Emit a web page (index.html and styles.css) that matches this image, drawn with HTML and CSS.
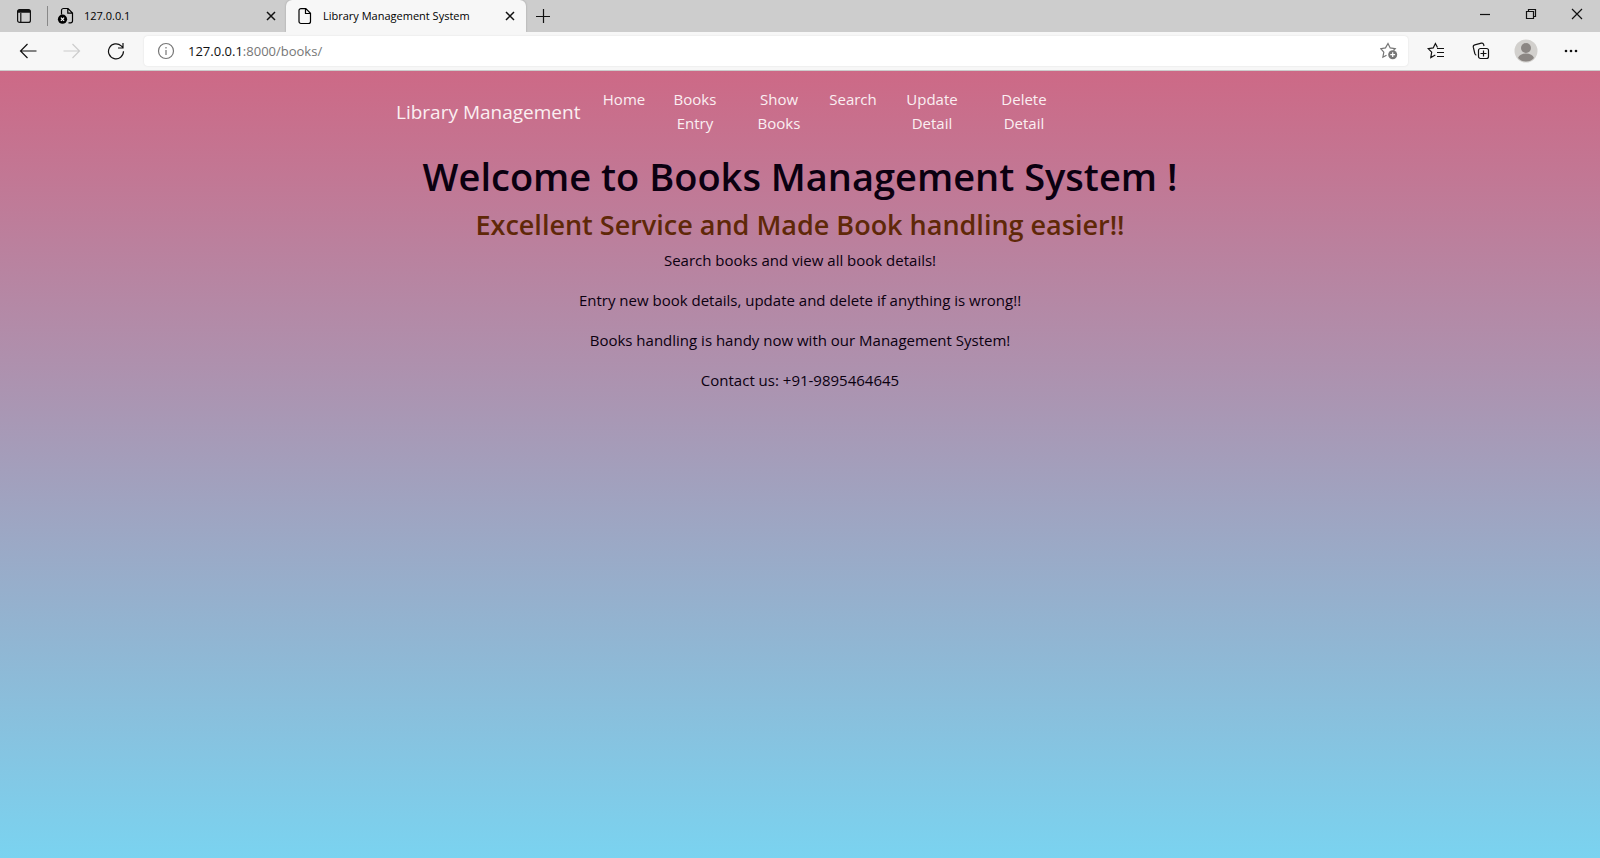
FILE: index.html
```html
<!DOCTYPE html>
<html lang="en">
<head>
<meta charset="utf-8">
<title>Library Management System</title>
<link rel="stylesheet" href="styles.css">
</head>
<body>
<div class="browser">
  <div class="tab-strip">
    <button class="icon-btn tab-menu" aria-label="Tab actions"><svg width="16" height="16" viewBox="0 0 16 16"><rect x="1.600" y="1.600" width="12.800" height="12.800" rx="2"/><path class="solid" d="M1.500 4.800V3.500a2 2 0 0 1 2-2h9a2 2 0 0 1 2 2v1.300z"/><path d="M4.800 5v9"/></svg></button>
    <span class="divider"></span>
    <div class="tab tab-idle">
      <svg class="tab-icon" width="18" height="18" viewBox="0 0 18 18"><path d="M4.500 7.500V3.500a2 2 0 0 1 2-2H11l4.500 4.500v8a1.800 1.800 0 0 1-1.800 1.800H11.500M10.800 1.700v4.500h4.500"/><circle cx="5.500" cy="12.200" r="4.600" class="solid"/><path class="light" d="M3.900 10.600l3.200 3.200M7.100 10.600l-3.200 3.200"/></svg>
      <span class="tab-title">127.0.0.1</span>
      <button class="icon-btn tab-close" aria-label="Close tab"><svg class="bold" width="10" height="10" viewBox="0 0 10 10"><path d="M1 1l8 8M9 1l-8 8"/></svg></button>
    </div>
    <div class="tab tab-active">
      <svg class="tab-icon" width="18" height="18" viewBox="0 0 18 18"><path d="M5 1.600h4.800l4.700 4.700v8.200a2 2 0 0 1-2 2H5a2 2 0 0 1-2-2V3.600a2 2 0 0 1 2-2zM9.500 1.800v4.700h4.800"/></svg>
      <span class="tab-title">Library Management System</span>
      <button class="icon-btn tab-close" aria-label="Close tab"><svg class="bold" width="10" height="10" viewBox="0 0 10 10"><path d="M1 1l8 8M9 1l-8 8"/></svg></button>
    </div>
    <button class="icon-btn new-tab" aria-label="New tab"><svg width="14" height="14" viewBox="0 0 14 14"><path d="M0 7.500h14M7.500 0v14"/></svg></button>
    <div class="window-controls">
      <button class="icon-btn" aria-label="Minimize"><svg width="12" height="12" viewBox="0 0 12 12"><path d="M1 6.500h10"/></svg></button>
      <button class="icon-btn" aria-label="Restore"><svg width="12" height="12" viewBox="0 0 12 12"><path d="M1.500 3.500h7v7h-7zM3.500 3.500v-2h7v7h-2"/></svg></button>
      <button class="icon-btn" aria-label="Close"><svg width="12" height="12" viewBox="0 0 12 12"><path d="M1 1l10 10M11 1L1 11"/></svg></button>
    </div>
  </div>
  <div class="toolbar">
    <div class="nav-buttons">
      <button class="icon-btn" aria-label="Back"><svg width="18" height="18" viewBox="0 0 18 18"><path d="M1.500 9h16M8.500 2l-7 7 7 7"/></svg></button>
      <button class="icon-btn muted" aria-label="Forward" disabled><svg width="18" height="18" viewBox="0 0 18 18"><path d="M.5 9h16M9.500 2l7 7-7 7"/></svg></button>
      <button class="icon-btn" aria-label="Refresh"><svg width="18" height="18" viewBox="0 0 18 18"><path d="M16.500 9.200A7.500 7.500 0 1 1 14.200 3.900L16 5.700M16 1v5h-5"/></svg></button>
    </div>
    <div class="address">
      <button class="icon-btn info" aria-label="Site information"><svg width="18" height="18" viewBox="0 0 18 18"><circle cx="9" cy="9" r="7.500"/><path d="M9 8v5M9 5v1.500"/></svg></button>
      <span class="url"><strong>127.0.0.1</strong>:8000/books/</span>
      <button class="icon-btn add-favorite" aria-label="Add to favorites"><svg width="18" height="18" viewBox="0 0 18 18"><path d="M6.500 13.200l-3.600 2 .9-5.100L.8 6.700l4.700-.8L8 1.500l2.200 4.400 5 .8-1.800 1.800"/><circle class="solid" cx="12.700" cy="12.700" r="4.500"/><path class="light" d="M10.300 12.700h4.800M12.700 10.300v4.800"/></svg></button>
    </div>
    <div class="tools">
      <button class="icon-btn" aria-label="Favorites"><svg width="18" height="18" viewBox="0 0 18 18"><path d="M10.500 5.500L8.400 1.500 6.200 5.900l-5 .8 3.500 3.500-.9 5.300 4.500-2.500M10 6.500h7M10 10.500h7M10 14.500h7"/></svg></button>
      <button class="icon-btn" aria-label="Collections"><svg width="18" height="18" viewBox="0 0 18 18"><rect x="6.500" y="6.500" width="10" height="10" rx="2"/><path d="M11.500 8.500v6M8.500 11.500h6M4.300 13.300a2.500 2.500 0 0 1-1.500-1.800L1.300 5.200a2 2 0 0 1 1.500-2.300l6.500-1.700a2 2 0 0 1 2.400 1.400l.3 1.400"/></svg></button>
      <button class="icon-btn" aria-label="Profile"><svg class="avatar" width="24" height="24" viewBox="0 0 24 24"><circle class="avatar-back" cx="12" cy="12" r="11.500"/><circle cx="12" cy="9" r="5"/><path d="M4 19c1-3 4-4.500 8-4.500s7 1.500 8 4.500a10.700 10.700 0 0 1-16 0z"/></svg></button>
      <button class="icon-btn" aria-label="Settings and more"><svg class="dots" width="16" height="16" viewBox="0 0 16 16"><circle cx="3" cy="8" r="1.300"/><circle cx="8" cy="8" r="1.300"/><circle cx="13" cy="8" r="1.300"/></svg></button>
    </div>
  </div>
</div>
<div class="page">
  <nav class="site-nav">
    <a class="brand" href="#">Library Management</a>
    <ul class="links">
      <li><a href="#">Home</a></li>
      <li><a href="#">Books Entry</a></li>
      <li><a href="#">Show Books</a></li>
      <li><a href="#">Search</a></li>
      <li><a href="#">Update Detail</a></li>
      <li><a href="#">Delete Detail</a></li>
    </ul>
  </nav>
  <main class="content">
    <h1>Welcome to Books Management System !</h1>
    <h2>Excellent Service and Made Book handling easier!!</h2>
    <p>Search books and view all book details!</p>
    <p>Entry new book details, update and delete if anything is wrong!!</p>
    <p>Books handling is handy now with our Management System!</p>
    <p>Contact us: +91-9895464645</p>
  </main>
</div>
</body>
</html>
```
FILE: styles.css
```css
* { box-sizing: border-box; }

body {
  margin: 0;
  min-height: 100vh;
  display: flex;
  flex-direction: column;
  font-family: "Open Sans", "Noto Sans", sans-serif;
  font-size: 15px;
  line-height: 24px;
}

svg {
  display: block;
  flex: none;
  fill: none;
  stroke: currentColor;
  stroke-width: 1.2;
}
svg .solid { fill: currentColor; stroke: none; }
svg .light { stroke: #fff; }
svg.bold { stroke-width: 1.5; }
svg.dots { fill: currentColor; stroke: none; }
svg.avatar { fill: #8b8683; stroke: none; }
svg .avatar-back { fill: #d2d0cd; }

.icon-btn {
  display: flex;
  align-items: center;
  justify-content: center;
  flex: none;
  padding: 0;
  border: 0;
  background: none;
  color: #111;
}
.icon-btn.muted { color: #ccc; }

.browser { background: #f7f7f7; border-bottom: 1px solid #ccc; }

.tab-strip {
  display: flex;
  height: 32px;
  background: #cdcdcd;
  font-size: 11px;
}
.tab-menu { width: 47px; }
.divider { width: 1px; margin: 6px 0; background: #888; }
.tab { display: flex; align-items: center; padding: 0 9px; }
.tab-idle { width: 238px; }
.tab-active {
  width: 240px;
  padding: 0 10px;
  border-radius: 6px 6px 0 0;
  background: #f7f7f7;
  box-shadow: 0 0 2px #999;
  clip-path: inset(0 -3px 0 -3px);
}
.tab-title { flex: 1; margin-left: 9px; white-space: nowrap; }
.tab-close { width: 12px; height: 20px; }
.new-tab { width: 34px; }
.window-controls { display: flex; margin-left: auto; padding-bottom: 4px; }
.window-controls .icon-btn { width: 46px; }

.toolbar { display: flex; align-items: center; height: 38px; }
.nav-buttons { display: flex; padding-left: 6px; }
.nav-buttons .icon-btn { width: 44px; }
.address {
  display: flex;
  align-items: center;
  flex: 1;
  height: 30px;
  margin-left: 6px;
  padding: 0 10px 0 13px;
  border-radius: 4px;
  background: #fff;
  box-shadow: 0 0 2px #ddd;
}
.info, .add-favorite { color: #767676; }
.url { flex: 1; margin-left: 13px; font-size: 13px; color: #767676; }
.url strong { font-weight: 400; color: #111; }
.tools { display: flex; padding: 0 6px 0 5px; }
.tools .icon-btn { width: 45px; }
.tools .icon-btn:last-child { width: 46px; }

.page {
  flex: 1;
  padding: 16px;
  background: linear-gradient(#cd6986, #7ad3f0);
  color: #0b0010;
  text-align: center;
}
.site-nav {
  display: flex;
  align-items: center;
  max-width: 808px;
  margin: 0 auto;
}
.brand {
  width: 197px;
  padding-top: 2px;
  color: #fbeff2;
  font-size: 19px;
  text-align: left;
  text-decoration: none;
  white-space: nowrap;
}
.links {
  display: grid;
  grid-template-columns: 62px 80px 88px 60px 98px 86px;
  margin: 0;
  padding: 0;
  list-style: none;
}
.links a { display: block; padding: 0 6px; color: #fbeff2; text-decoration: none; }
.links li:nth-child(n+5) a { padding: 0 16px; }

.content { margin-top: 17px; }
h1, h2 { margin: 0 0 8px; font-weight: 600; }
h1 { font-size: 38px; line-height: 48px; }
h2 { margin-bottom: 6px; color: #5f2808; font-size: 27px; line-height: 34px; }
p { margin: 0 0 16px; }
```
